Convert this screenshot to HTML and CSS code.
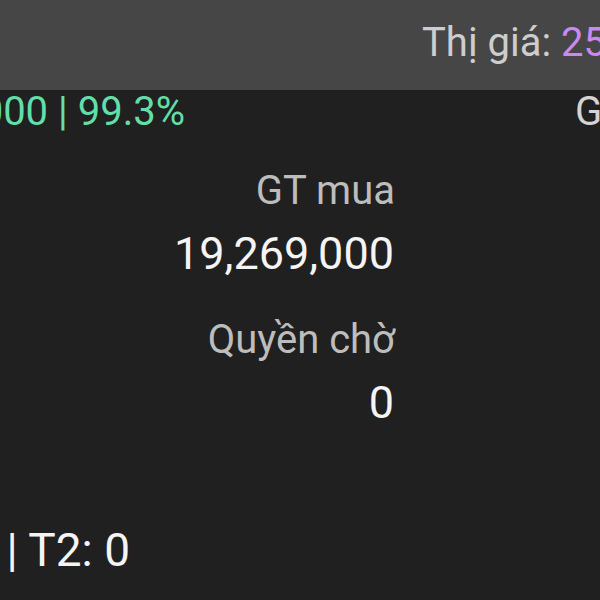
FILE: index.html
```html
<!DOCTYPE html>
<html lang="vi">
<head>
<meta charset="utf-8">
<title>Tài sản</title>
<link rel="stylesheet" href="styles.css">
</head>
<body>
  <header class="topbar">
    <span class="price-label">Thị giá: </span><span class="price-value">25,800</span>
  </header>
  <main class="board">
    <div class="summary-left"><span class="green">19,398,000 | 99.3%</span></div>
    <div class="summary-right">GT hiện tại</div>
    <div class="stats">
      <div class="stat">
        <div class="stat-label">GT mua</div>
        <div class="stat-value">19,269,000</div>
      </div>
      <div class="stat">
        <div class="stat-label">Quyền chờ</div>
        <div class="stat-value">0</div>
      </div>
    </div>
  </main>
  <footer class="settle">
    <span class="settle-text">T1: 0 | T2: 0</span>
  </footer>
</body>
</html>
```
FILE: styles.css
```css
html, body {
  margin: 0;
  padding: 0;
}
body {
  width: 600px;
  height: 600px;
  overflow: hidden;
  background: #202020;
  font-family: Roboto, "Noto Sans", sans-serif;
  color: #f2f2f2;
}
.topbar {
  height: 90px;
  box-sizing: border-box;
  padding: 19px 0 0 422px;
  background: #464646;
  font-size: 40px;
  line-height: 47px;
  white-space: nowrap;
  overflow: hidden;
}
.price-label {
  color: #cdcdcd;
}
.price-value {
  color: #c98af0;
}
.board {
  display: grid;
  grid-template-columns: 185px 210px 180px 1fr;
  grid-template-rows: 44px auto;
}
.summary-left {
  grid-column: 1;
  grid-row: 1;
  display: flex;
  justify-content: flex-end;
  font-size: 40px;
  line-height: 44px;
  white-space: nowrap;
}
.green {
  color: #62dfa8;
  flex-shrink: 0;
}
.summary-right {
  grid-column: 4;
  grid-row: 1;
  font-size: 40px;
  line-height: 44px;
  white-space: nowrap;
  color: #d4d4d4;
}
.stats {
  grid-column: 2;
  grid-row: 2;
  margin-top: 33px;
  display: flex;
  flex-direction: column;
  gap: 36px;
}
.stat {
  display: flex;
  flex-direction: column;
  align-items: flex-end;
  gap: 13px;
}
.stat-label {
  font-size: 40px;
  line-height: 47px;
  color: #bdbdbd;
  white-space: nowrap;
}
.stat-value {
  font-size: 45px;
  line-height: 53px;
  color: #f4f4f4;
  white-space: nowrap;
  margin-right: 1px;
}
.settle {
  width: 130px;
  margin-top: 95px;
  display: flex;
  justify-content: flex-end;
  font-size: 46px;
  line-height: 53px;
  white-space: nowrap;
}
.settle-text {
  flex-shrink: 0;
  color: #f4f4f4;
}
```
